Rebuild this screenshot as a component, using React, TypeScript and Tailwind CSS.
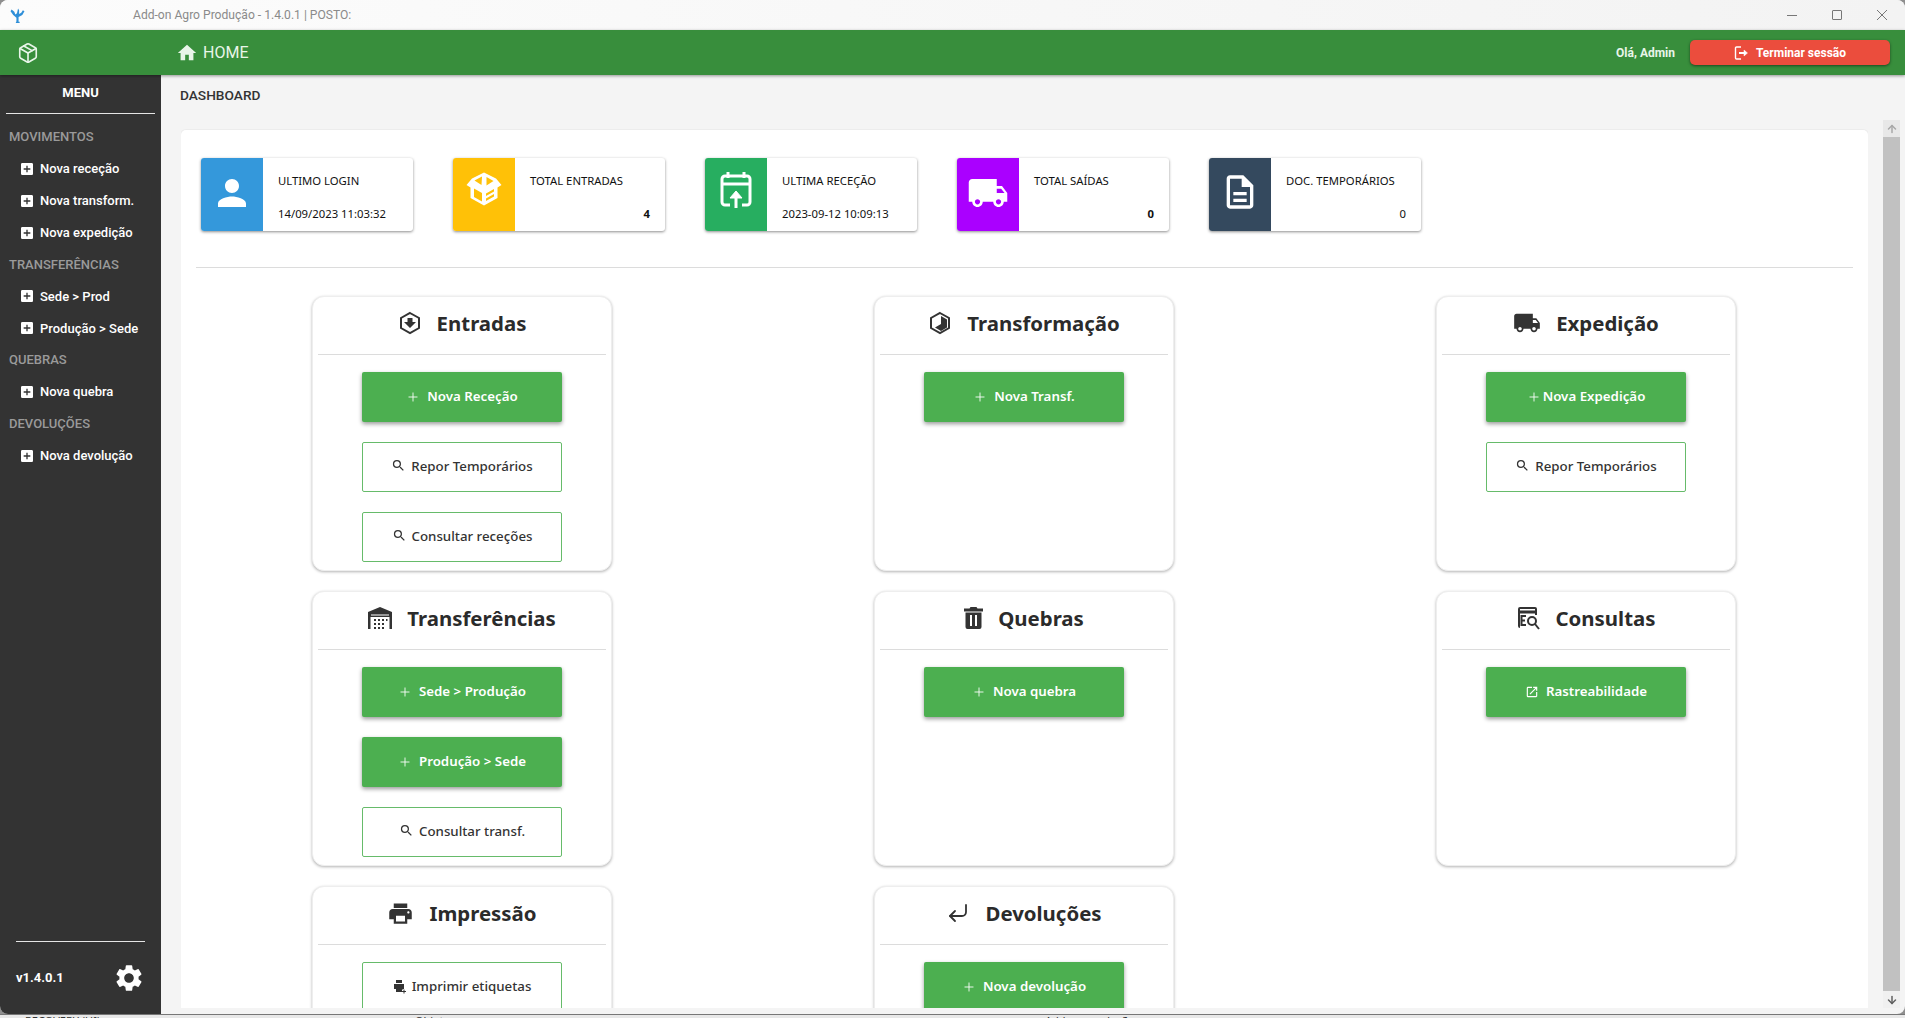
import React from "react";
import { Package, Plus, CornerDownLeft, ArrowUp, ArrowDown } from "lucide-react";
import {
  MdAddBox,
  MdHome,
  MdLocalShipping,
  MdOutlineDescription,
  MdOutlineOpenInNew,
  MdPerson,
  MdPrint,
  MdSearch,
  MdSettings,
} from "react-icons/md";

const SIDE_MENU = [
  { title: "MOVIMENTOS", items: ["Nova receção", "Nova transform.", "Nova expedição"] },
  { title: "TRANSFERÊNCIAS", items: ["Sede > Prod", "Produção > Sede"] },
  { title: "QUEBRAS", items: ["Nova quebra"] },
  { title: "DEVOLUÇÕES", items: ["Nova devolução"] },
];

function TitleLogo() {
  return (
    <svg width="15" height="15" viewBox="0 0 14 14" fill="#2f8fd8">
      <path d="M5.500 14h3.500v-1.200H8V8.500l3.500-2L13.500 3 12 2l-1.500 2.500L8.500 5.500V2L7.500 0.500 6.500 5 5 6 4 3.500 1.500 1.500 0.500 3l2.500 3.500 3 2.500v3.800H5.500z" />
    </svg>
  );
}

function BoxOpen() {
  return (
    <svg width="36" height="34" viewBox="0 0 36 34" fill="white">
      <path d="M18 0.500L30 6.500 35.500 13 31.500 15.500V26L18 33.500 4.500 26V15.500L0.500 13 6 6.500z" />
      <path d="M16 4.500L8.500 8.500 15.500 13z" fill="#ffc107" />
      <path d="M20.500 5v8.500L27.500 9z" fill="#ffc107" />
      <path d="M8 16.500l8 4.500v8.500l-8-4.500z" fill="#ffc107" />
      <path d="M20 21.500l8-4.500v2.500l-8 4.500zM20 26.500l8-4.500v2.500l-8 4.500z" fill="#ffc107" />
    </svg>
  );
}

function CalendarUpload() {
  return (
    <svg width="32" height="36" viewBox="0 0 32 36" fill="none" stroke="white" strokeWidth="3">
      <path d="M8 0v6M24 0v6" />
      <path d="M10 33H5a3 3 0 0 1-3-3V7a3 3 0 0 1 3-3h22a3 3 0 0 1 3 3v23a3 3 0 0 1-3 3h-5" />
      <path d="M2 12h28" />
      <path d="M16 36V21" />
      <path d="M10 26l6-7 6 7z" fill="white" strokeWidth="1" />
    </svg>
  );
}

function HexDown() {
  return (
    <svg width="24" height="24" viewBox="0 0 24 24" fill="none">
      <path d="M12 2l9 5v10l-9 5-9-5V7z" stroke="#333" strokeWidth="2" />
      <path d="M9.500 7h5v4H18l-6 6-6-6h3.500z" fill="#333" />
    </svg>
  );
}

function HexQuarter() {
  return (
    <svg width="24" height="24" viewBox="0 0 24 24" fill="none">
      <path d="M12 2l9 5v10l-9 5-9-5V7z" stroke="#333" strokeWidth="2" />
      <path d="M13 5l6 3.500v8L13 20l-6-3.500 6-3.500z" fill="#333" />
    </svg>
  );
}

function Warehouse() {
  return (
    <svg width="24" height="22" viewBox="0 0 24 22" fill="#333">
      <path d="M12 0L0 5v17h2.500V10h19v12H24V5z" />
      <path d="M3 7.500h18v1H3z" fill="white" />
      <path d="M6 12h2v2H6zM10 12h2v2h-2zM14 12h2v2h-2zM18 12h1.500v2H18zM6 16h2v2H6zM10 16h2v2h-2zM14 16h2v2h-2zM6 20h2v2H6zM10 20h2v2h-2zM14 20h2v2h-2z" />
    </svg>
  );
}

function Trash() {
  return (
    <svg width="19" height="22" viewBox="0 0 19 22" fill="#333">
      <path d="M6.500 0h6l1 1.500H19V4.500H0V1.500h5.500zM1.500 5.500h16V20a2 2 0 0 1-2 2h-12a2 2 0 0 1-2-2z" />
      <path d="M6 8h2v11H6zM11 8h2v11h-2z" fill="white" />
    </svg>
  );
}

function FindDoc() {
  return (
    <svg width="24" height="24" viewBox="0 0 24 24" fill="none" stroke="#333" strokeWidth="2">
      <path d="M3 21a1 1 0 0 1-1-1V3a1 1 0 0 1 1-1h15a1 1 0 0 1 1 1v6" />
      <path d="M2 6h17" strokeWidth="3" />
      <path d="M9 10H4.500v9H9M4.500 14.500H8" />
      <circle cx="15" cy="15" r="4" />
      <path d="M18 18l4 5" />
    </svg>
  );
}

function PrintLabel() {
  return (
    <svg width="14" height="14" viewBox="0 0 14 14" fill="#333">
      <path d="M3 0h6v3H3zM1 4h10v5H9.500v1H9v2H3v-3H1z" />
      <path d="M10.500 9.500h1V11H13v1h-1.500v1.500h-1V12H9v-1h1.500z" />
    </svg>
  );
}

function LogoutIcon() {
  return (
    <svg width="14" height="14" viewBox="0 0 14 14" fill="none" stroke="white" strokeWidth="1.400">
      <path d="M7 1H2.500A1 1 0 0 0 1.500 2v10a1 1 0 0 0 1 1H7" />
      <path d="M5 7h6" strokeWidth="2" />
      <path d="M10 4l3.500 3-3.500 3z" fill="white" strokeWidth="0.500" />
    </svg>
  );
}

function KpiCard({
  color,
  icon,
  label,
  value,
  valueClass,
}: {
  color: string;
  icon: React.ReactNode;
  label: string;
  value: string;
  valueClass: string;
}) {
  return (
    <div className="flex w-[212px] h-[73px] bg-white rounded-[3px] shadow-[0_1px_3px_rgba(0,0,0,0.45)] overflow-hidden">
      <div className={`flex justify-center pt-[14px] w-[62px] shrink-0 ${color}`}>{icon}</div>
      <div className="flex flex-col flex-1 px-[15px] pt-[14px] font-['Noto_Sans',sans-serif] text-[11.300px] text-[#111]">
        <div className="leading-[18px] h-[33px]">{label}</div>
        <div className={`leading-[18px] ${valueClass}`}>{value}</div>
      </div>
    </div>
  );
}

function ActionButton({
  icon,
  label,
  outline,
  tight,
}: {
  icon: React.ReactNode;
  label: string;
  outline?: boolean;
  tight?: boolean;
}) {
  return (
    <button
      className={
        tight
          ? "flex items-center justify-center gap-[2px] w-[200px] h-[50px] bg-[#4caf50] rounded-[2px] text-white text-[13.300px] font-semibold font-['Noto_Sans',sans-serif] shadow-[0_2px_4px_rgba(0,0,0,0.4)]"
          : outline
            ? "flex items-center justify-center gap-[5px] w-[200px] h-[50px] bg-white border border-[#66bb6a] rounded-[2px] text-[#333] text-[13.300px] font-medium font-['Noto_Sans',sans-serif]"
            : "flex items-center justify-center gap-[7px] w-[200px] h-[50px] bg-[#4caf50] rounded-[2px] text-white text-[13.300px] font-semibold font-['Noto_Sans',sans-serif] shadow-[0_2px_4px_rgba(0,0,0,0.4)]"
      }
    >
      {icon}
      {label}
    </button>
  );
}

const plus = <Plus size={14} strokeWidth={1.500} />;
const search = <MdSearch size={15} className="-mt-[3px]" />;

function Panel({
  icon,
  title,
  children,
}: {
  icon: React.ReactNode;
  title: string;
  children?: React.ReactNode;
}) {
  return (
    <div className="w-[300px] h-[275px] justify-self-center bg-white rounded-[12px] border border-[#eeeeee] shadow-[0_1px_3px_rgba(0,0,0,0.3)] px-[5px]">
      <div className="flex items-center justify-center gap-[15px] h-[58px] pb-[5px] border-b border-[#dcdcdc] text-[20.400px] font-bold text-[#2b2b2b] font-['Noto_Sans',sans-serif]">
        {icon}
        <span>{title}</span>
      </div>
      <div className="flex flex-col items-center gap-[20px] pt-[17px]">{children}</div>
    </div>
  );
}

export default function App() {
  return (
    <div className="flex flex-col h-[1018px] w-[1905px] overflow-hidden bg-[#8f8f8f] font-['Roboto',sans-serif]">
      <div className="flex flex-col h-[1014px] bg-[#f4f4f4] rounded-[8px] overflow-hidden">
        {/* barra da janela */}
        <div className="flex items-center h-[30px] bg-gradient-to-r from-[#fcfcfc] to-[#f3f3f3] shrink-0">
          <div className="w-[133px] pl-[10px] flex">
            <TitleLogo />
          </div>
          <span className="text-[12.100px] text-[#8a8a8a]">
            Add-on Agro Produção - 1.4.0.1 | POSTO:
          </span>
          <div className="flex items-center gap-[35px] ml-auto pr-[18px] text-[#777]">
            <div className="w-[10px] h-px bg-[#777]" />
            <div className="w-[10px] h-[10px] border border-[#777] rounded-[1px]" />
            <svg width="10" height="10" viewBox="0 0 10 10" stroke="#777">
              <path d="M0 0l10 10M10 0L0 10" />
            </svg>
          </div>
        </div>

        {/* barra verde */}
        <div className="flex items-center h-[45px] bg-[#388e3c] shadow-[0_1px_3px_rgba(0,0,0,0.4)] shrink-0 z-10">
          <div className="w-[178px] pl-[17px] flex">
            <Package size={22} strokeWidth={1.800} className="text-[#e8f5e9]" />
          </div>
          <MdHome size={22} className="text-[#e8f5e9] -ml-[2px]" />
          <span className="ml-[5px] text-[16px] text-[#e8f5e9]">HOME</span>
          <span className="ml-auto text-[12px] font-bold text-[#e8f5e9]">Olá, Admin</span>
          <button className="flex items-center justify-center gap-[8px] w-[200px] h-[25px] mx-[15px] bg-[#eb4d3d] rounded-[5px] text-white text-[12px] font-bold shadow-[0_1px_3px_rgba(0,0,0,0.5)]">
            <LogoutIcon />
            Terminar sessão
          </button>
        </div>

        <div className="flex flex-1 min-h-0">
          {/* menu lateral */}
          <aside className="flex flex-col w-[161px] bg-[#333333] text-white shrink-0">
            <div className="mx-[6px] h-[39px] pb-[3px] flex items-center justify-center border-b border-[#e5e5e5] text-[13px] font-bold">
              MENU
            </div>
            <div className="pt-[7px]">
              {SIDE_MENU.map((group) => (
                <div key={group.title}>
                  <div className="flex items-center h-[31.900px] pl-[9px] text-[13px] font-medium text-[#9a9a9a]">
                    {group.title}
                  </div>
                  {group.items.map((item) => (
                    <div key={item} className="flex items-center h-[31.900px] pl-[19px] gap-[5px] text-[13px] font-medium">
                      <MdAddBox size={16} />
                      {item}
                    </div>
                  ))}
                </div>
              ))}
            </div>
            <div className="mt-auto mx-[16px] border-t border-[#e5e5e5]" />
            <div className="flex items-center justify-between h-[72px] px-[16px] text-[13px] font-bold">
              v1.4.0.1
              <MdSettings size={32} />
            </div>
          </aside>

          {/* conteudo */}
          <main className="flex flex-col flex-1 min-w-0">
            <div className="flex items-center h-[45px] pb-[4px] pl-[19px] text-[13.700px] text-[#333] font-medium shrink-0">
              DASHBOARD
            </div>
            <div className="flex flex-1 min-h-0 pl-[20px] pr-[5px] pb-[6px]">
              <div className="flex-1 min-w-0 pt-[10px] overflow-hidden">
                <div className="bg-white rounded-t-[5px] shadow-[0_0_0_1px_#ececec] h-[900px]">
                  <div className="px-[15px]">
                    <div className="flex gap-[40px] pt-[28px] pl-[5px] pb-[36px] border-b border-[#dcdcdc]">
                      <KpiCard color="bg-[#3498db]" icon={<MdPerson size={42} className="text-white" />} label="ULTIMO LOGIN" value="14/09/2023 11:03:32" valueClass="" />
                      <KpiCard color="bg-[#ffc107]" icon={<BoxOpen />} label="TOTAL ENTRADAS" value="4" valueClass="text-right font-bold" />
                      <KpiCard color="bg-[#27ae60]" icon={<CalendarUpload />} label="ULTIMA RECEÇÃO" value="2023-09-12 10:09:13" valueClass="" />
                      <KpiCard color="bg-[#aa00ff]" icon={<MdLocalShipping size={42} className="text-white" />} label="TOTAL SAÍDAS" value="0" valueClass="text-right font-bold" />
                      <KpiCard color="bg-[#34495e]" icon={<MdOutlineDescription size={40} className="text-white" />} label="DOC. TEMPORÁRIOS" value="0" valueClass="text-right" />
                    </div>
                  </div>
                  <div className="grid grid-cols-3 gap-y-[20px] pt-[28px] pr-[1px]">
                    <Panel icon={<HexDown />} title="Entradas">
                      <ActionButton icon={plus} label="Nova Receção" />
                      <ActionButton outline icon={search} label="Repor Temporários" />
                      <ActionButton outline icon={search} label="Consultar receções" />
                    </Panel>
                    <Panel icon={<HexQuarter />} title="Transformação">
                      <ActionButton icon={plus} label="Nova Transf." />
                    </Panel>
                    <Panel icon={<MdLocalShipping size={28} className="text-[#333]" />} title="Expedição">
                      <ActionButton tight icon={plus} label="Nova Expedição" />
                      <ActionButton outline icon={search} label="Repor Temporários" />
                    </Panel>
                    <Panel icon={<Warehouse />} title="Transferências">
                      <ActionButton icon={plus} label="Sede > Produção" />
                      <ActionButton icon={plus} label="Produção > Sede" />
                      <ActionButton outline icon={search} label="Consultar transf." />
                    </Panel>
                    <Panel icon={<Trash />} title="Quebras">
                      <ActionButton icon={plus} label="Nova quebra" />
                    </Panel>
                    <Panel icon={<FindDoc />} title="Consultas">
                      <ActionButton icon={<MdOutlineOpenInNew size={14} />} label="Rastreabilidade" />
                    </Panel>
                    <Panel icon={<MdPrint size={27} className="text-[#333]" />} title="Impressão">
                      <ActionButton outline icon={<PrintLabel />} label="Imprimir etiquetas" />
                    </Panel>
                    <Panel icon={<CornerDownLeft size={24} strokeWidth={1.800} className="text-[#333]" />} title="Devoluções">
                      <ActionButton icon={plus} label="Nova devolução" />
                    </Panel>
                  </div>
                </div>
              </div>

              {/* barra de scroll */}
              <div className="flex flex-col w-[17px] ml-[15px] bg-[#f0f0f0] shrink-0">
                <div className="flex items-center justify-center h-[17px] bg-[#e8e8e8] text-[#a8a8a8]">
                  <ArrowUp size={12} strokeWidth={3} />
                </div>
                <div className="flex-1 bg-[#c1c1c1]" />
                <div className="flex items-center justify-center h-[17px] text-[#606060]">
                  <ArrowDown size={12} strokeWidth={3} />
                </div>
              </div>
            </div>
          </main>
        </div>
      </div>
      {/* resto do ambiente de trabalho */}
      <div className="flex-1 overflow-hidden bg-[#e8e8e8] border-t border-[#777] text-[11px] leading-[12px] text-[#333] pl-[25px] flex font-['Noto_Sans',sans-serif]">
        <span className="w-[390px]">RECOVERY (UI)</span>
        <span className="w-[630px]">Objetos</span>
        <span>Add-on produção</span>
      </div>
    </div>
  );
}
